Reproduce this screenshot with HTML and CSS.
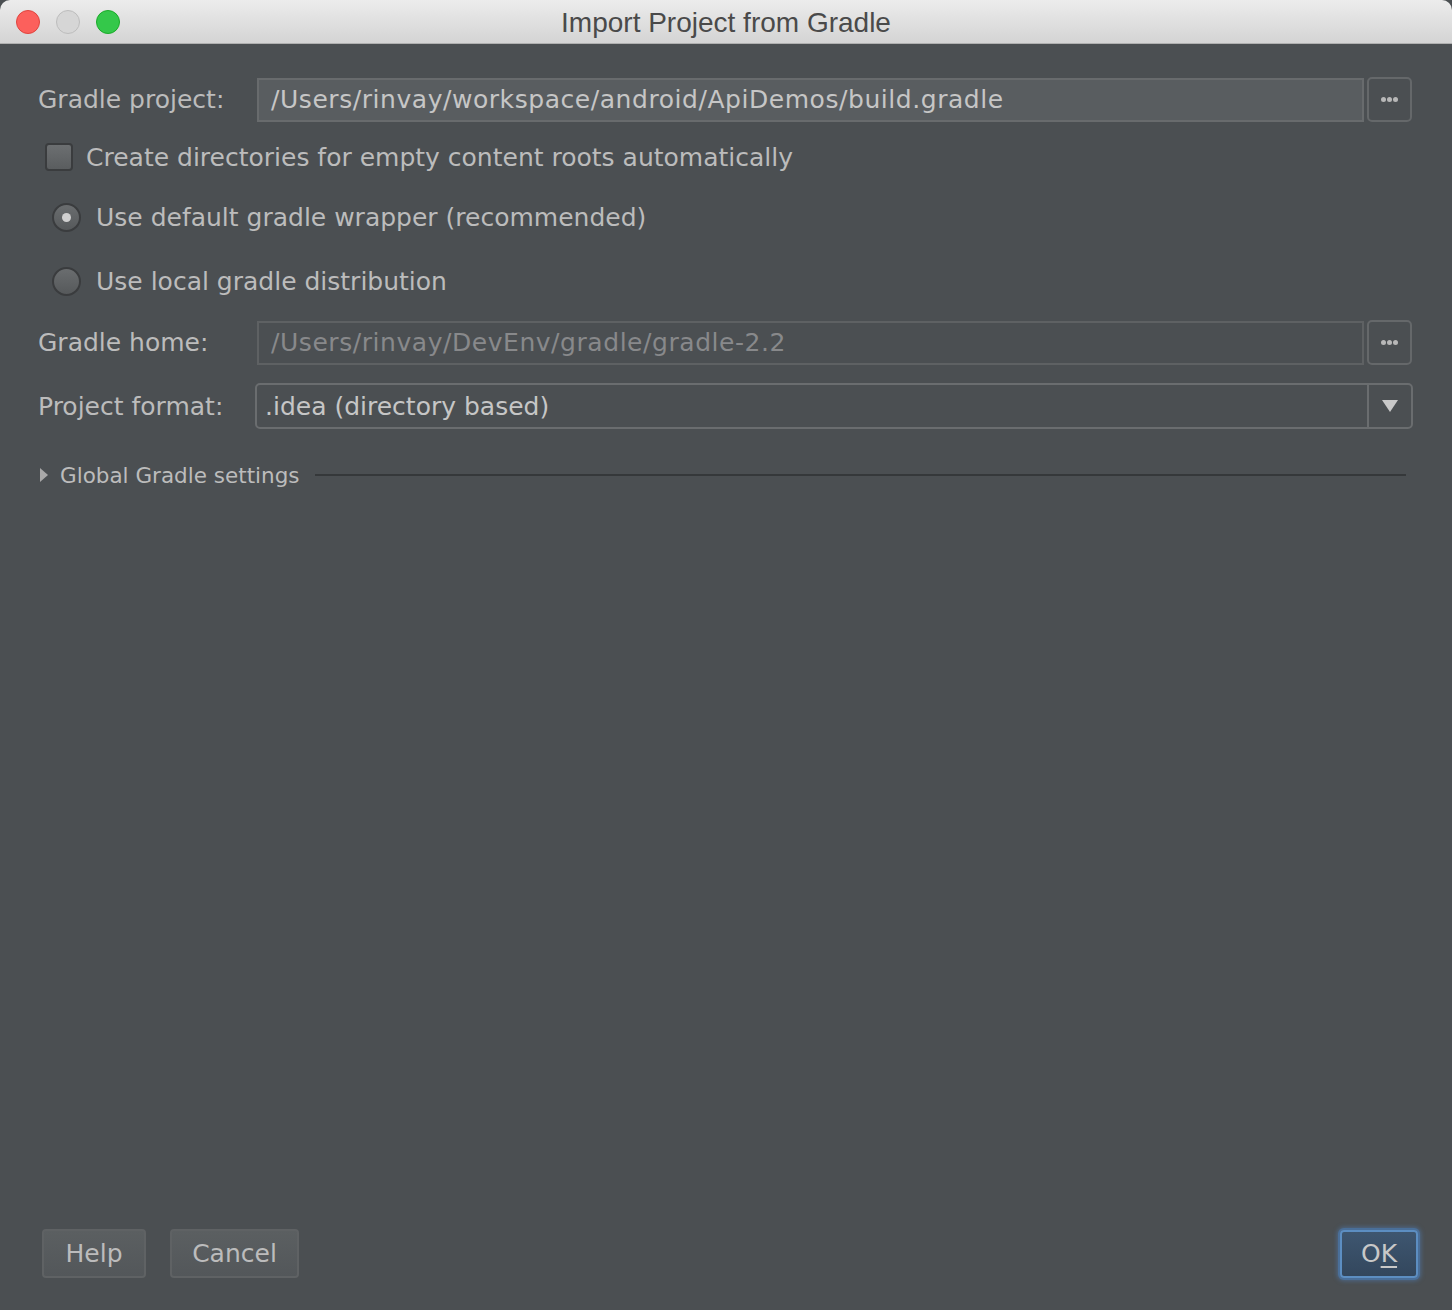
FILE: index.html
```html
<!DOCTYPE html>
<html>
<head>
<meta charset="utf-8">
<link rel="stylesheet" href="styles.css">
</head>
<body>
<div class="window">
  <div class="titlebar">
    <div class="lights">
      <span class="light red"></span>
      <span class="light gray"></span>
      <span class="light green"></span>
    </div>
    <div class="title">Import Project from Gradle</div>
  </div>
  <div class="content">
    <div class="row row-project">
      <label class="label">Gradle project:</label>
      <div class="field">/Users/rinvay/workspace/android/ApiDemos/build.gradle</div>
      <div class="browse"><span class="dots"><i></i><i></i><i></i></span></div>
    </div>
    <div class="check-row">
      <span class="checkbox"></span>
      <span class="opt-text">Create directories for empty content roots automatically</span>
    </div>
    <div class="radio-row first">
      <span class="radio checked"><span class="dot"></span></span>
      <span class="opt-text">Use default gradle wrapper (recommended)</span>
    </div>
    <div class="radio-row second">
      <span class="radio"></span>
      <span class="opt-text">Use local gradle distribution</span>
    </div>
    <div class="row row-home">
      <label class="label">Gradle home:</label>
      <div class="field disabled">/Users/rinvay/DevEnv/gradle/gradle-2.2</div>
      <div class="browse"><span class="dots"><i></i><i></i><i></i></span></div>
    </div>
    <div class="row row-format">
      <label class="label">Project format:</label>
      <div class="combo">
        <span class="combo-text">.idea (directory based)</span>
        <span class="combo-arrow"><svg width="16" height="12" viewBox="0 0 16 12"><path d="M0 0 H16 L8 12 Z" fill="#c8c8c8"/></svg></span>
      </div>
    </div>
    <div class="section">
      <svg class="tri" width="8" height="14" viewBox="0 0 8 14"><path d="M0 0 L8 7 L0 14 Z" fill="#a9a9a9"/></svg>
      <span class="section-title">Global Gradle settings</span>
      <span class="section-line"></span>
    </div>
    <div class="spacer"></div>
    <div class="buttons">
      <button class="btn help">Help</button>
      <button class="btn cancel">Cancel</button>
      <div class="grow"></div>
      <button class="btn ok">O<u>K</u></button>
    </div>
  </div>
</div>
</body>
</html>
```
FILE: styles.css
```css
html, body {
  margin: 0;
  padding: 0;
  width: 1452px;
  height: 1310px;
  overflow: hidden;
  background: #4b4f52;
}
.window {
  width: 1452px;
  height: 1310px;
  display: flex;
  flex-direction: column;
  background: #4b4f52;
  font-family: "DejaVu Sans", "Noto Sans", sans-serif;
  color: #bcbcbc;
}
.titlebar {
  height: 43px;
  flex: none;
  position: relative;
  background: linear-gradient(#ececec, #d4d4d4);
  border-bottom: 1px solid #b0b0b0;
  border-radius: 10px 10px 0 0;
  display: flex;
  align-items: center;
  justify-content: center;
}
.lights {
  position: absolute;
  left: 16px;
  top: 10px;
  display: flex;
  gap: 16px;
}
.light {
  width: 24px;
  height: 24px;
  border-radius: 50%;
  box-sizing: border-box;
  display: block;
}
.light.red { background: #fc605c; border: 1px solid #e0443e; }
.light.gray { background: #d6d6d6; border: 1px solid #bdbdbd; }
.light.green { background: #34c84a; border: 1px solid #1aab29; }
.title {
  font-family: "Liberation Sans", Arial, sans-serif;
  font-size: 28px;
  color: #4a4a4a;
  margin-top: 2px;
}
.content {
  flex: 1;
  display: flex;
  flex-direction: column;
  padding: 33px 40px 32px 38px;
  font-size: 25px;
}
.row {
  display: flex;
  align-items: center;
}
.label {
  width: 219px;
  flex: none;
  color: #bcbcbc;
}
.field {
  flex: 1;
  height: 44px;
  box-sizing: border-box;
  border: 2px solid #686b6d;
  background: #595d60;
  padding-left: 12px;
  display: flex;
  align-items: center;
  color: #c6c6c6;
  letter-spacing: 0.55px;
  white-space: nowrap;
}
.field.disabled {
  background: #4b4f52;
  border-color: #5e6163;
  color: #88898b;
}
.browse {
  width: 45px;
  height: 45px;
  box-sizing: border-box;
  border: 2px solid #65686a;
  border-radius: 5px;
  margin-left: 3px;
  display: flex;
  align-items: center;
  justify-content: center;
}
.dots { display: flex; gap: 1px; }
.dots i {
  display: block;
  width: 5px;
  height: 5px;
  border-radius: 50%;
  background: #b8b8b8;
}
.check-row {
  display: flex;
  align-items: center;
  margin-top: 20px;
  padding-left: 7px;
  height: 30px;
}
.checkbox {
  width: 28px;
  height: 28px;
  box-sizing: border-box;
  border: 2px solid #3a3c3e;
  border-radius: 4px;
  background: linear-gradient(#6c6f71, #5a5d5f);
  margin-right: 13px;
}
.radio-row {
  display: flex;
  align-items: center;
  padding-left: 14px;
  height: 30px;
}
.radio-row.first { margin-top: 30px; }
.radio-row.second { margin-top: 34px; }
.radio {
  width: 29px;
  height: 29px;
  box-sizing: border-box;
  border-radius: 50%;
  border: 2px solid #3a3c3e;
  background: linear-gradient(#6a6d6f, #56595b);
  margin-right: 15px;
  display: flex;
  align-items: center;
  justify-content: center;
}
.radio .dot {
  width: 9px;
  height: 9px;
  border-radius: 50%;
  background: #d0d0d0;
}
.opt-text { color: #bcbcbc; }
.row-home { margin-top: 24px; }
.row-format { margin-top: 18px; }
.row-format .label { width: 217px; }
.combo {
  flex: 1;
  height: 46px;
  box-sizing: border-box;
  border: 2px solid #6a6d6f;
  border-radius: 5px;
  margin-right: -1px;
  display: flex;
  align-items: center;
  color: #c6c6c6;
}
.combo-text { flex: 1; padding-left: 8px; }
.combo-arrow {
  width: 42px;
  height: 100%;
  border-left: 2px solid #6a6d6f;
  display: flex;
  align-items: center;
  justify-content: center;
}
.section {
  display: flex;
  align-items: center;
  margin-top: 31px;
  padding-left: 2px;
  height: 30px;
}
.tri { margin-right: 12px; }
.section-title {
  font-size: 21.5px;
  color: #bcbcbc;
  margin-right: 15px;
}
.section-line {
  flex: 1;
  height: 2px;
  background: #35383a;
  margin-right: 6px;
}
.spacer { flex: 1; }
.buttons {
  display: flex;
  align-items: center;
  padding-left: 4px;
}
.grow { flex: 1; }
.btn {
  font-family: "DejaVu Sans", sans-serif;
  font-size: 25px;
  color: #bcbcbc;
  height: 49px;
  box-sizing: border-box;
  border: 2px solid #5f6264;
  border-radius: 4px;
  background: linear-gradient(#5b5f61, #53575a);
  padding: 0;
}
.help { width: 104px; }
.cancel { width: 129px; margin-left: 24px; }
.ok {
  width: 78px;
  height: 48px;
  margin-right: -6px;
  background: linear-gradient(#3e5670, #33475d);
  border: 2px solid #5c8ec2;
  color: #c8c8c8;
  box-shadow: 0 0 0 2px #4a6f99, 0 0 4px 3px rgba(80,130,190,0.5);
}
.ok u { text-decoration-thickness: 2px; text-underline-offset: 4px; }
```
